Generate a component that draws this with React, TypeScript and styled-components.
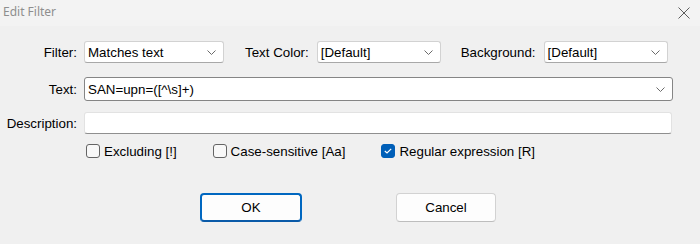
import React from 'react';
import styled, { createGlobalStyle, css } from 'styled-components';

const GlobalStyle = createGlobalStyle`
    html, body {
        margin: 0;
        padding: 0;
        background: #f0f0f0;
    }
    body {
        width: 700px;
        height: 244px;
        overflow: hidden;
        font-family: 'Liberation Sans', Arial, sans-serif;
        font-size: 13.33px;
        color: #000;
    }
`;

const Window = styled.div`
    display: flex;
    flex-direction: column;
    width: 700px;
    height: 244px;
    background: #f0f0f0;
`;

const TitleBar = styled.div`
    display: flex;
    align-items: center;
    justify-content: space-between;
    height: 26px;
    padding: 0 10px 4px 3px;
    box-sizing: border-box;
    background: #f3f3f3;
    font-family: 'Noto Sans', 'Open Sans', sans-serif;
    font-size: 12px;
    color: #8e8e8e;
`;

const CloseButton = styled.div`
    display: flex;
    width: 12px;
    height: 12px;
    margin-top: 4px;
`;

const Body = styled.div`
    display: flex;
    flex-direction: column;
`;

const Row = styled.div<{ $top: number; $h: number }>`
    display: flex;
    align-items: center;
    margin-top: ${(p) => p.$top}px;
    height: ${(p) => p.$h}px;
`;

const FieldLabel = styled.label`
    width: 77px;
    margin-right: 7px;
    text-align: right;
    white-space: nowrap;
`;

const InlineLabel = styled.label<{ $left: number }>`
    margin-left: ${(p) => p.$left}px;
    margin-right: 8px;
    white-space: nowrap;
`;

const Combo = styled.div<{ $w: number; $strong?: boolean }>`
    display: flex;
    align-items: center;
    justify-content: space-between;
    box-sizing: border-box;
    width: ${(p) => p.$w}px;
    height: 100%;
    padding: 0 7px 0 3px;
    background: #fff;
    border-radius: 3px;
    ${(p) =>
        p.$strong
            ? css`
                  border: 1px solid #858585;
              `
            : css`
                  border: 1px solid #d2d2d2;
                  border-bottom-color: #a8a8a8;
              `}
`;

const Input = styled.div`
    box-sizing: border-box;
    width: 588px;
    height: 100%;
    background: #fff;
    border: 1px solid #e2e2e2;
    border-bottom-color: #8f8f8f;
    border-radius: 3px;
`;

const Chevron = () => (
    <svg width="9" height="5" viewBox="0 0 9 5">
        <path d="M0.5 0.5 L4.5 4.5 L8.5 0.5" fill="none" stroke="#6a6a6a" strokeWidth="1" />
    </svg>
);

const CheckRow = styled.div`
    display: flex;
    align-items: center;
    gap: 36px;
    margin-left: 86px;
`;

const CheckItem = styled.label`
    display: flex;
    align-items: center;
    gap: 4px;
    white-space: nowrap;
`;

const Box = styled.span<{ $checked?: boolean }>`
    display: flex;
    align-items: center;
    justify-content: center;
    box-sizing: border-box;
    width: 14px;
    height: 14px;
    border-radius: 3px;
    ${(p) =>
        p.$checked
            ? css`
                  background: #005fb8;
                  border: 1px solid #005fb8;
              `
            : css`
                  background: #f8f8f8;
                  border: 1px solid #646464;
              `}
`;

const Check = ({ label, checked }: { label: string; checked?: boolean }) => (
    <CheckItem>
        <Box $checked={checked}>
            {checked && (
                <svg width="8" height="6" viewBox="0 0 8 6">
                    <path d="M0.8 3 L3 5 L7.2 0.8" fill="none" stroke="#fff" strokeWidth="1.2" />
                </svg>
            )}
        </Box>
        {label}
    </CheckItem>
);

const ButtonRow = styled.div`
    display: flex;
    margin-top: 35px;
    margin-left: 200px;
    gap: 94px;
`;

const Button = styled.button<{ $primary?: boolean }>`
    box-sizing: border-box;
    width: ${(p) => (p.$primary ? 102 : 100)}px;
    height: 29px;
    font-family: 'Liberation Sans', Arial, sans-serif;
    font-size: 13.33px;
    color: #000;
    background: #fdfdfd;
    border-radius: 4px;
    padding: 0;
    ${(p) =>
        p.$primary
            ? css`
                  border: 2px solid #0067c0;
                  border-bottom-color: #0a5aa8;
              `
            : css`
                  border: 1px solid #d2d2d2;
                  border-bottom-color: #bdbdbd;
              `}
`;

export default function App() {
    return (
        <Window>
            <GlobalStyle />
            <TitleBar>
                <span>Edit Filter</span>
                <CloseButton>
                    <svg width="12" height="12" viewBox="0 0 12 12">
                        <path d="M0.5 0.5 L11.5 11.5 M11.5 0.5 L0.5 11.5" stroke="#5c5c5c" strokeWidth="1" />
                    </svg>
                </CloseButton>
            </TitleBar>
            <Body>
                <Row $top={15} $h={22}>
                    <FieldLabel>Filter:</FieldLabel>
                    <Combo $w={140}>
                        <span>Matches text</span>
                        <Chevron />
                    </Combo>
                    <InlineLabel $left={21}>Text Color:</InlineLabel>
                    <Combo $w={124}>
                        <span>[Default]</span>
                        <Chevron />
                    </Combo>
                    <InlineLabel $left={20}>Background:</InlineLabel>
                    <Combo $w={124}>
                        <span>[Default]</span>
                        <Chevron />
                    </Combo>
                </Row>
                <Row $top={14} $h={24}>
                    <FieldLabel>Text:</FieldLabel>
                    <Combo $w={589} $strong>
                        <span>SAN=upn=([^\s]+)</span>
                        <Chevron />
                    </Combo>
                </Row>
                <Row $top={11} $h={22}>
                    <FieldLabel>Description:</FieldLabel>
                    <Input />
                </Row>
                <Row $top={10} $h={14}>
                    <CheckRow>
                        <Check label="Excluding [!]" />
                        <Check label="Case-sensitive [Aa]" />
                        <Check label="Regular expression [R]" checked />
                    </CheckRow>
                </Row>
                <ButtonRow>
                    <Button $primary>OK</Button>
                    <Button>Cancel</Button>
                </ButtonRow>
            </Body>
        </Window>
    );
}
